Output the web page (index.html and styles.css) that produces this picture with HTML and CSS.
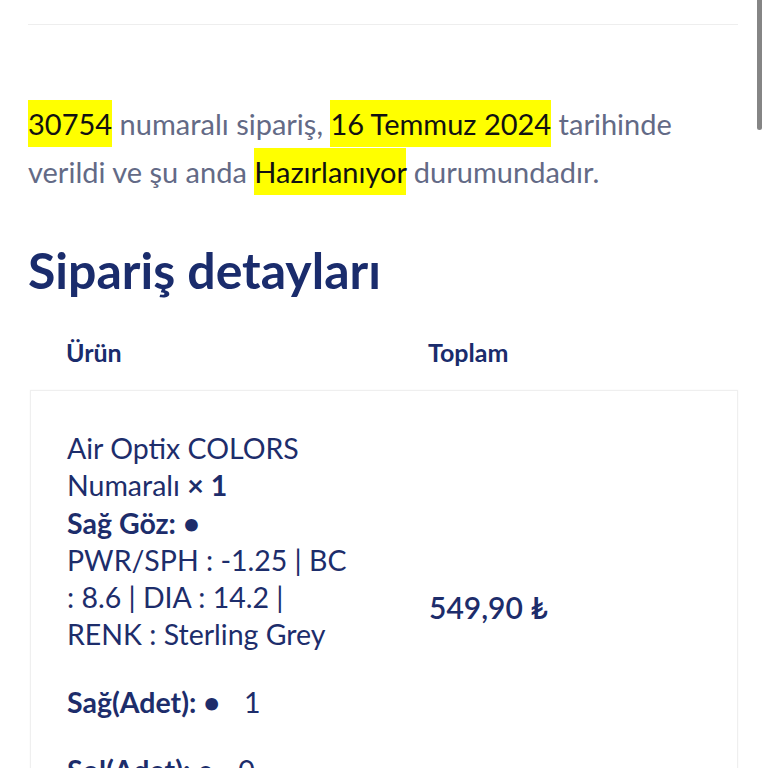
FILE: index.html
```html
<!DOCTYPE html>
<html lang="tr">
<head>
<meta charset="utf-8">
<title>Sipariş detayları</title>
<link rel="stylesheet" href="styles.css">
</head>
<body>
<div class="scrollbar"></div>
<div class="page">
  <div class="topline"></div>
  <p class="status"><mark>30754</mark> numaralı sipariş, <mark>16 Temmuz 2024</mark> tarihinde verildi ve şu anda <mark>Hazırlanıyor</mark> durumundadır.</p>
  <h2 class="title">Sipariş detayları</h2>
  <div class="thead">
    <div class="th">Ürün</div>
    <div class="th">Toplam</div>
  </div>
  <div class="card">
    <div class="product">
      <div class="item-block">
        <div class="name">Air Optix COLORS Numaralı <strong>× 1</strong></div>
        <div class="meta-label"><strong>Sağ Göz: <span class="dot">•</span></strong></div>
        <div class="meta-value">PWR/SPH : -1.25 | BC : 8.6 | DIA : 14.2 | RENK : Sterling Grey</div>
      </div>
      <div class="qty"><strong>Sağ(Adet): <span class="dot">•</span></strong><span class="qv">1</span></div>
      <div class="qty"><strong>Sol(Adet): <span class="dot">•</span></strong><span class="qv">0</span></div>
    </div>
    <div class="price">549,90 ₺</div>
  </div>
</div>
</body>
</html>
```

FILE: styles.css
```css
html, body {
  margin: 0;
  padding: 0;
  overflow: hidden;
  background: #ffffff;
}

body {
  font-family: "Lato", "Noto Sans", sans-serif;
  color: #1d2d6b;
}

.scrollbar {
  position: fixed;
  top: 0;
  right: 6px;
  width: 5px;
  height: 130px;
  background: #858585;
  border-radius: 0 0 3px 3px;
}

.page {
  padding: 0 30px 0 28px;
}

.topline {
  height: 24px;
  border-bottom: 1px solid #eeeeee;
}

.status {
  margin: 75px 0 0 0;
  font-size: 29px;
  line-height: 48px;
  color: #636a86;
}

.status mark {
  background: #ffff00;
  color: #111111;
  padding: 6px 0;
}

.title {
  margin: 44px 0 0 0;
  font-size: 50px;
  line-height: 60px;
  font-weight: 700;
  color: #1a2c6c;
}

.thead {
  display: grid;
  grid-template-columns: 362px 1fr;
  margin-left: 2px;
  padding: 34px 0 20px 0;
}

.th {
  font-size: 25px;
  line-height: 36px;
  font-weight: 700;
  padding-left: 36px;
  color: #1a2c6c;
}

.card {
  display: grid;
  grid-template-columns: 362px 1fr;
  margin-left: 2px;
  border: 1px solid #efefef;
  box-shadow: 0 0 2px rgba(0, 0, 0, 0.04);
}

.product {
  padding: 39px 36px 39px 36px;
  font-size: 28.5px;
  line-height: 37px;
}

.product strong {
  font-weight: 700;
}

.dot {
  font-size: 29px;
}

.qty {
  margin-top: 30px;
}

.qv {
  margin-left: 24px;
}

.price {
  align-self: center;
  padding-left: 36px;
  font-size: 30px;
  font-weight: 600;
  line-height: 37px;
  margin-top: -4px;
}
```
